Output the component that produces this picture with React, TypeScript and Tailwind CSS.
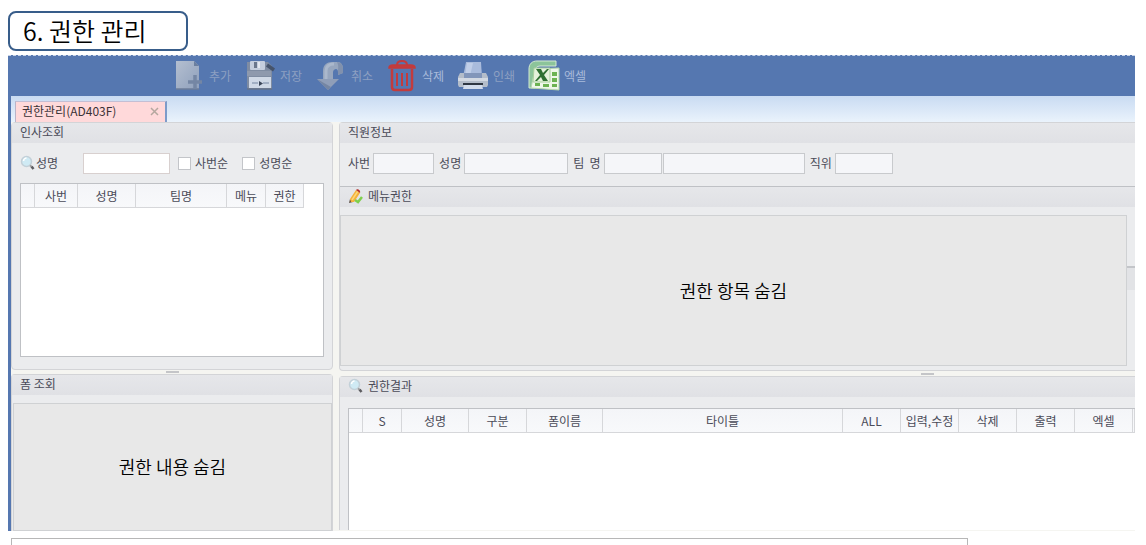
import React, { useState } from 'react';
import clsx from 'clsx';

const AddIcon = () => (
  <svg width="32" height="32" viewBox="0 0 32 32">
    <defs>
      <linearGradient id="page" x1="0" y1="0" x2="1" y2="1">
        <stop offset="0" stopColor="#b4bfd0" />
        <stop offset="1" stopColor="#8fa0bc" />
      </linearGradient>
    </defs>
    <path d="M3 1h18l5 5v23H3z" fill="url(#page)" />
    <path d="M21 1v5h5z" fill="#6b7f9f" />
    <path d="M3 29h23" stroke="#6d7d98" strokeWidth="1.5" />
    <path d="M22 15v14M15 22h14" stroke="#7486a4" strokeWidth="3.500" />
  </svg>
);

const SaveIcon = () => (
  <svg width="32" height="32" viewBox="0 0 32 32">
    <path d="M3 2h21l4 4v23H4l-1-2z" fill="#7f8ca2" />
    <rect x="6" y="1" width="15" height="9" rx="1" fill="#c5cedd" />
    <rect x="10" y="2" width="3" height="6" fill="#6b778c" />
    <path d="M15 2v6" stroke="#eef1f6" strokeWidth="1.5" />
    <path d="M3 11h24v5H3z" fill="#8e99ad" />
    <rect x="5" y="17" width="22" height="11" fill="#cfd8e6" />
    <path d="M8 23h6M19 23h6" stroke="#a2afc4" strokeWidth="2" />
    <path d="M15 21l4 2.500-4 2.500z" fill="#3b4659" />
    <path d="M23 5l7 5" stroke="#45536b" strokeWidth="3.500" />
    <path d="M3 29h25" stroke="#66738a" strokeWidth="1.500" />
  </svg>
);

const CancelIcon = () => (
  <svg width="32" height="32" viewBox="0 0 32 32">
    <path d="M8 19V11C8 5 12 2 17 2h6c3 0 5 3 5 7v4l-5 2v-3c0-2-1-3-2-3s-3 1-3 3v7z" fill="#97a6be" />
    <path d="M11 19V11c0-5 3-7 8-7" fill="none" stroke="#abb8cc" strokeWidth="3" />
    <path d="M22 2c4 0 6 3 6 7v4l-5 2v-3c0-4 1-6-1-10z" fill="#8191ad" />
    <path d="M2 19h22l-11 11z" fill="#8f9eb8" />
    <path d="M2 19l11 11 3-3z" fill="#7586a3" />
  </svg>
);

const DeleteIcon = () => (
  <svg width="32" height="32" viewBox="0 0 32 32" fill="none" stroke="#c23b3d">
    <path d="M11 5c0-3 2-4 5-4s5 1 5 4" strokeWidth="2" />
    <path d="M3 8c0-2 2-3 4-3h18c2 0 4 1 4 3z" fill="#c23b3d" strokeWidth="1.500" />
    <path d="M6 9v18c0 2 1 3 3 3h14c2 0 3-1 3-3V9" strokeWidth="2.500" />
    <path d="M11 13v13M16 13v13M21 13v13" strokeWidth="2" />
  </svg>
);

const PrintIcon = () => (
  <svg width="32" height="32" viewBox="0 0 32 32">
    <path d="M9 2h15l1 15H6z" fill="#a9bbdc" />
    <path d="M10 3h6l-3 13H8z" fill="#c0cee8" />
    <path d="M3 13h4v4h18v-4h4l2 4v8l-1 2H2l-1-2v-8z" fill="#b4bdca" />
    <path d="M7 13h18v5H7z" fill="#8296ba" />
    <path d="M1 18h30v3H1z" fill="#d3d9e2" />
    <path d="M6 23h20v2H6z" fill="#2f3743" />
    <path d="M7 25h18l1 4H6z" fill="#d2dcec" />
  </svg>
);

const ExcelIcon = () => (
  <svg width="32" height="32" viewBox="0 0 32 32">
    <path d="M1 28V9c0-5 3-8 8-8h19v5H12c-3 0-5 2-5 5v17z" fill="#8cc49a" stroke="#d4ead2" />
    <path d="M7 9l24-1v22L3 28l4-19z" fill="#eef7e9" stroke="#b4d7ad" />
    <path d="M24 12h5v4h-5zM24 18h5v4h-5zM24 24h5v3h-5zM15 24h6v3h-6zM7 23h5v3H7z" fill="#6cb352" />
    <path d="M6 8h16v14H5z" fill="#e5f2db" stroke="#a8cf9d" />
    <path d="M8 9h5l2 4 4-4h2l-5 6 4 6h-5l-2-4-4 4H7l5-6z" fill="#2f7031" />
  </svg>
);

const SearchIcon = () => (
  <svg width="16" height="16" viewBox="0 0 16 16" className="shrink-0">
    <circle cx="6.500" cy="6.500" r="5" fill="#cfeaf4" stroke="#c3d0d8" strokeWidth="1.500" />
    <path d="M3.500 6c0-2 2-3 3-3" fill="none" stroke="#fff" strokeWidth="1.500" />
    <path d="M10 10.500l1.500 1" stroke="#9a9a9a" strokeWidth="2" />
    <path d="M11.500 11.500l2 2.500" stroke="#5c5c60" strokeWidth="2.500" />
  </svg>
);

const PencilIcon = () => (
  <svg width="16" height="16" viewBox="0 0 16 16" className="shrink-0">
    <path d="M1 15l1-4 3 3z" fill="#5a4d44" />
    <path d="M2 11l6-9 4 3-6 9-3 0z" fill="#f5b13a" />
    <path d="M4 12l6-9" stroke="#fbd77b" strokeWidth="1.500" />
    <path d="M8 2c1-2 5 0 4 3z" fill="#b5302c" />
    <path d="M7 12l3 2 4-5" fill="none" stroke="#7fcf4c" strokeWidth="2.500" />
  </svg>
);

const toolbar = [
  { id: 'add', label: '추가', icon: <AddIcon />, color: 'text-[#8da0c2]' },
  { id: 'save', label: '저장', icon: <SaveIcon />, color: 'text-[#8da0c2]' },
  { id: 'cancel', label: '취소', icon: <CancelIcon />, color: 'text-[#8da0c2]' },
  { id: 'delete', label: '삭제', icon: <DeleteIcon />, color: 'text-[#a9bbdb]' },
  { id: 'print', label: '인쇄', icon: <PrintIcon />, color: 'text-[#8da0c2]' },
  { id: 'excel', label: '엑셀', icon: <ExcelIcon />, color: 'text-[#a9bbdb]' },
];

const personColumns = [
  { label: '', width: 'w-[14px]' },
  { label: '사번', width: 'w-[43px]' },
  { label: '성명', width: 'w-[58px]' },
  { label: '팀명', width: 'w-[91px]' },
  { label: '메뉴', width: 'w-[39px]' },
  { label: '권한', width: 'w-[38px]' },
];

const resultColumns = [
  { label: '', width: 'w-[14px]' },
  { label: 'S', width: 'w-[39px]' },
  { label: '성명', width: 'w-[67px]' },
  { label: '구분', width: 'w-[58px]' },
  { label: '폼이름', width: 'w-[76px]' },
  { label: '타이틀', width: '' },
  { label: 'ALL', width: 'w-[58px]' },
  { label: '입력,수정', width: 'w-[58px]' },
  { label: '삭제', width: 'w-[58px]' },
  { label: '출력', width: 'w-[58px]' },
  { label: '엑셀', width: 'w-[58px]' },
  { label: '', width: 'w-[2px]' },
];

type Column = { label: string; width: string };

function GridHead({ columns }: { columns: Column[] }) {
  return (
    <thead>
      <tr className="h-6 bg-linear-to-b from-[#f4f5f8] to-[#f8f9fb]">
        {columns.map((col, i) => (
          <th
            key={i}
            className={clsx(
              'border-r border-b border-[#d6d7da] p-0 font-normal whitespace-nowrap',
              col.width
            )}
          >
            {col.label}
          </th>
        ))}
      </tr>
    </thead>
  );
}

function PanelHeader({ title, icon }: { title: string; icon?: React.ReactNode }) {
  return (
    <h2 className="flex h-5 shrink-0 items-center gap-1 bg-linear-to-b from-[#e6e7ea] to-[#e0e1e5] px-2 pb-[2px]">
      {icon}
      {title}
    </h2>
  );
}

function Field({ label, id, width }: { label: string; id: string; width: string }) {
  return (
    <div className="flex items-center gap-[3px]">
      <label htmlFor={id} className="whitespace-pre">
        {label}
      </label>
      <input
        id={id}
        type="text"
        readOnly
        className={clsx('h-[21px] border border-[#c8cacd] bg-[#f5f6f9] px-1 outline-none', width)}
      />
    </div>
  );
}

export default function App() {
  const [name, setName] = useState('');
  const [sortByNumber, setSortByNumber] = useState(false);
  const [sortByName, setSortByName] = useState(false);

  const checkbox =
    'size-[13px] appearance-none border border-[#c3c5c9] bg-white checked:bg-[#5577b0]';

  return (
    <div className="flex min-h-screen flex-col bg-white px-2 pt-[11px] font-['Noto_Sans_CJK_KR',sans-serif] text-xs leading-4 text-[#4a4b58]">
      <h1 className="mb-1 flex h-10 w-[180px] shrink-0 items-center rounded-lg border-2 border-[#385d8a] px-[13px] pb-[2px] text-[25px] font-[350] text-black">
        6. 권한 관리
      </h1>

      <div className="mr-[3px]">
        {/* Toolbar */}
        <div className="flex h-[41px] items-center border-t border-dashed border-[#c9d5e8] bg-[#5577b0] pl-[165px]">
          {toolbar.map((item) => (
            <button
              key={item.id}
              type="button"
              className={clsx('flex w-[71px] items-center gap-1 whitespace-nowrap', item.color)}
            >
              {item.icon}
              {item.label}
            </button>
          ))}
        </div>

        <div className="border-l-3 border-[#5577b0]">
          {/* Tabs */}
          <div className="flex h-[26px] items-end bg-linear-to-b from-[#c9dbf2] to-[#eaf3fc] pl-1">
            <div className="flex h-[21px] w-[152px] items-center justify-between border-t border-r-2 border-l border-t-[#c4bfd4] border-r-[#7d9bc9] border-l-[#b9b4c8] bg-[#ffd9da] px-[6px] pb-[2px] text-[#3a3236]">
              <span>권한관리(AD403F)</span>
              <button type="button" aria-label="닫기" className="text-[#b5a79f]">
                <svg width="9" height="9" viewBox="0 0 9 9" stroke="currentColor" strokeWidth="1.500">
                  <path d="M1 1l7 7M8 1L1 8" />
                </svg>
              </button>
            </div>
          </div>

          <div className="flex items-start gap-[6px] bg-[#f5f5f1]">
            {/* Left column */}
            <div className="flex w-[322px] shrink-0 flex-col">
              <section className="h-[248px] rounded-sm border border-[#d3d4d7] bg-[#ebecee]">
                <PanelHeader title="인사조회" />
                <div className="flex h-10 items-center px-2">
                  <SearchIcon />
                  <label htmlFor="search-name" className="w-[47px]">
                    성명
                  </label>
                  <input
                    id="search-name"
                    type="text"
                    value={name}
                    onChange={(e) => setName(e.target.value)}
                    className="h-[21px] w-[87px] border border-[#d8d0cf] bg-white px-1 outline-none"
                  />
                  <label className="ml-2 flex items-center gap-1">
                    <input
                      type="checkbox"
                      checked={sortByNumber}
                      onChange={(e) => setSortByNumber(e.target.checked)}
                      className={checkbox}
                    />
                    사번순
                  </label>
                  <label className="ml-[14px] flex items-center gap-1">
                    <input
                      type="checkbox"
                      checked={sortByName}
                      onChange={(e) => setSortByName(e.target.checked)}
                      className={checkbox}
                    />
                    성명순
                  </label>
                </div>
                <div className="mx-2 h-[174px] border border-[#bfc1c5] bg-white">
                  <table className="table-fixed border-separate border-spacing-0">
                    <GridHead columns={personColumns} />
                  </table>
                </div>
              </section>

              <div className="flex h-1 items-center justify-center">
                <span className="h-[2px] w-[13px] bg-[#c4c5c8]" />
              </div>

              <section className="rounded-t-sm border border-b-0 border-[#d3d4d7] bg-[#ebecee]">
                <PanelHeader title="폼 조회" />
                <div className="mt-2 ml-px flex h-[128px] items-center justify-center border border-[#cfd1d3] bg-[#e8e8e8] pb-[2px] text-lg font-[350] text-black">
                  권한 내용 숨김
                </div>
              </section>
            </div>

            {/* Right column */}
            <div className="flex min-w-0 flex-1 flex-col">
              <section className="rounded-l-sm border border-r-0 border-[#d3d4d7] bg-[#ebecee]">
                <PanelHeader title="직원정보" />
                <div className="flex h-11 items-center gap-[5px] border-b border-[#bfc1c5] px-2 pb-[3px]">
                  <Field label="사번" id="emp-no" width="w-[61px]" />
                  <Field label="성명" id="emp-name" width="w-[104px]" />
                  <div className="flex items-center gap-px">
                    <Field label="팀  명" id="team-code" width="w-[58px]" />
                    <input
                      type="text"
                      readOnly
                      aria-label="팀 이름"
                      className="h-[21px] w-[142px] border border-[#c8cacd] bg-[#f5f6f9] px-1 outline-none"
                    />
                  </div>
                  <Field label="직위" id="position" width="w-[58px]" />
                </div>
                <PanelHeader title="메뉴권한" icon={<PencilIcon />} />
                <div className="mt-2 mb-1 flex">
                  <div className="flex h-[151px] flex-1 items-center justify-center border border-[#cfd1d3] bg-[#e8e8e8] pb-[2px] text-lg font-[350] text-black">
                    권한 항목 숨김
                  </div>
                  <div className="w-2 pt-[51px]">
                    <div className="h-6 border-t-2 border-[#c3c5c9] bg-[#e2e3e6]" />
                  </div>
                </div>
              </section>

              <div className="flex h-[5px] items-center justify-center pl-[380px]">
                <span className="h-[2px] w-[13px] bg-[#c4c5c8]" />
              </div>

              <section className="rounded-tl-sm border border-r-0 border-b-0 border-[#d3d4d7] bg-[#ebecee] pl-2">
                <div className="-ml-2">
                  <PanelHeader title="권한결과" icon={<SearchIcon />} />
                </div>
                <div className="mt-[11px] h-[122px] border-t border-l border-[#bfc1c5] bg-white">
                  <table className="w-full table-fixed border-separate border-spacing-0">
                    <GridHead columns={resultColumns} />
                  </table>
                </div>
              </section>
            </div>
          </div>
        </div>
      </div>

      <div className="mt-[7px] mr-[170px] ml-[3px] flex-1 border border-b-0 border-[#b7b7b7]" />
    </div>
  );
}
